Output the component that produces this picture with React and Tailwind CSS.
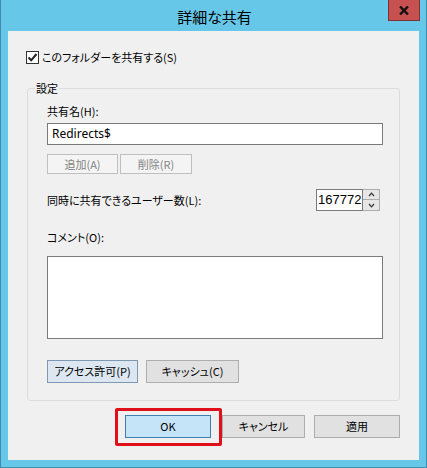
import React from "react";

const jp = "[font-family:'Noto_Sans_CJK_JP','Noto_Sans',sans-serif] [font-feature-settings:'palt']";

function Btn({ children, className = "", w }) {
  return (
    <div
      className={`flex items-center justify-center border text-[11px] leading-none text-black ${className}`}
      style={{ width: w }}
    >
      {children}
    </div>
  );
}

export default function App() {
  return (
    <div className={`w-[427px] h-[468px] bg-[#66C7E8] border-x border-b border-[#3d8fae] flex flex-col ${jp}`}>
      {/* title bar */}
      <div className="relative h-[31px] shrink-0 flex items-center justify-center">
        <span className="text-[15px] text-black leading-none mt-[1px] ml-[2px]">詳細な共有</span>
        <div className="absolute top-0 right-[6px] w-[32px] h-[21px] bg-[#C75050] border border-[#7a3434] border-t-0 flex items-center justify-center">
          <svg width="10" height="9" viewBox="0 0 10 9">
            <path d="M1 0.5 L9 8.5 M9 0.5 L1 8.5" stroke="#111" strokeWidth="2.4" />
          </svg>
        </div>
      </div>

      {/* content */}
      <div className="mx-[7px] flex-1 mb-[7px] bg-[#F0F0F0] flex flex-col">
        {/* checkbox row */}
        <div className="mt-[19px] ml-[18px] flex items-center h-[14px]">
          <div className="w-[13px] h-[13px] border border-[#333] bg-white flex items-center justify-center">
            <svg width="11" height="11" viewBox="0 0 11 11">
              <path d="M1.5 5.5 L4.2 8.3 L9.5 2" stroke="#222" strokeWidth="2" fill="none" />
            </svg>
          </div>
          <span className="ml-[3px] text-[11px] leading-none text-black">このフォルダーを共有する(S)</span>
        </div>

        {/* group box */}
        <div className="relative mt-[24px] mx-[19px] border border-[#DCDCDC] rounded-[3px] pl-[19px] pr-[16px] pt-[15px] pb-[17px]">
          <span className="absolute -top-[8px] left-[7px] px-[1px] bg-[#F0F0F0] text-[11px] leading-[14px] text-black">設定</span>

          <div className="h-[14px] text-[11px] leading-[14px] text-black">共有名(H):</div>
          <div className="mt-[5px] h-[22px] border border-[#7A7A7A] bg-white flex items-center pl-[4px] text-[12px] text-black [font-family:'Noto_Sans',sans-serif]">
            Redirects$
          </div>

          <div className="mt-[9px] flex gap-[2px]">
            <Btn w={71} className="h-[20px] bg-[#F4F4F4] border-[#BFBFBF] !text-[#838383]">追加(A)</Btn>
            <Btn w={72} className="h-[20px] bg-[#F4F4F4] border-[#BFBFBF] !text-[#838383]">削除(R)</Btn>
          </div>

          <div className="mt-[15px] flex items-center justify-between">
            <span className="text-[11px] leading-none text-black">同時に共有できるユーザー数(L):</span>
            <div className="flex h-[22px] mr-[3px]">
              <div className="w-[47px] h-[22px] border border-[#7A7A7A] bg-white flex items-center pl-[1px] text-[13px] text-black [font-family:'Liberation_Sans',sans-serif]">
                167772
              </div>
              <div className="w-[17px] flex flex-col">
                <div className="h-[11px] bg-[#E6E6E6] border border-[#ACACAC] border-l-0 flex items-center justify-center">
                  <svg width="7" height="5" viewBox="0 0 7 5"><path d="M1 4 L3.5 1.2 L6 4" stroke="#333" strokeWidth="1.2" fill="none" /></svg>
                </div>
                <div className="h-[11px] bg-[#E6E6E6] border border-[#ACACAC] border-l-0 border-t-0 flex items-center justify-center">
                  <svg width="7" height="5" viewBox="0 0 7 5"><path d="M1 1 L3.5 3.8 L6 1" stroke="#333" strokeWidth="1.2" fill="none" /></svg>
                </div>
              </div>
            </div>
          </div>

          <div className="mt-[19px] h-[14px] text-[11px] leading-[14px] text-black">コメント(O):</div>
          <div className="mt-[12px] h-[83px] border border-[#7A7A7A] bg-white"></div>

          <div className="mt-[21px] flex gap-[8px]">
            <Btn w={91} className="h-[23px] bg-[#DCE7F1] border-[#7E98B2]">アクセス許可(P)</Btn>
            <Btn w={93} className="h-[23px] bg-[#E1E1E1] border-[#ADADAD]">キャッシュ(C)</Btn>
          </div>
        </div>

        {/* bottom buttons */}
        <div className="mt-[14px] mr-[19px] flex justify-end items-center">
          <div className="relative">
            <Btn w={86} className="h-[23px] bg-[#C6E4F7] border-[#3C7FB1]">OK</Btn>
            <div className="absolute -left-[10px] -right-[11px] -top-[7px] -bottom-[8px] border-[3px] border-[#E0101A] rounded-[2px] pointer-events-none"></div>
          </div>
          <Btn w={83} className="ml-[11px] h-[23px] bg-[#E1E1E1] border-[#ADADAD]">キャンセル</Btn>
          <Btn w={86} className="ml-[9px] h-[23px] bg-[#E1E1E1] border-[#ADADAD]">適用</Btn>
        </div>
      </div>
    </div>
  );
}
